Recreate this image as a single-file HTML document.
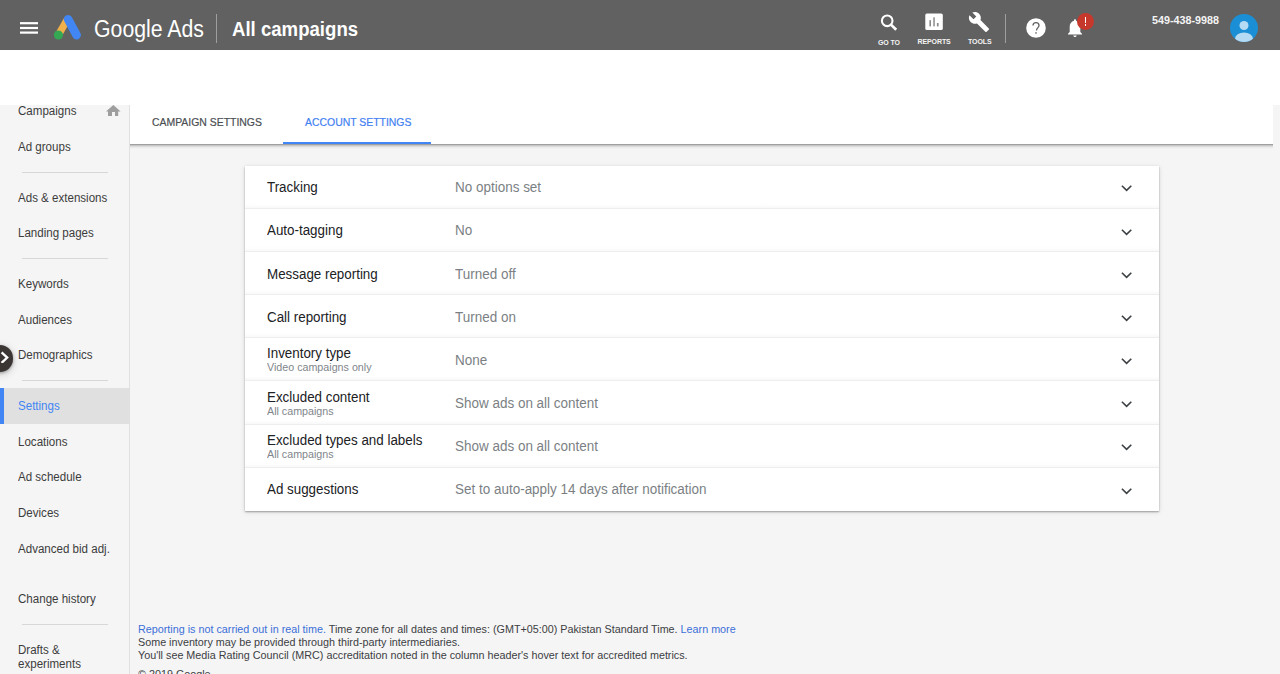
<!DOCTYPE html>
<html><head><meta charset="utf-8">
<style>
*{box-sizing:border-box;margin:0;padding:0}
html,body{width:1280px;height:674px;overflow:hidden;background:#fff;font-family:"Liberation Sans",sans-serif;}
.abs{position:absolute}
.t{position:absolute;white-space:nowrap;line-height:1;transform-origin:0 0}
#hdr{position:absolute;left:0;top:0;width:1280px;height:50px;background:#616161;color:#fff}
#hdr .lab{position:absolute;font-size:7px;font-weight:bold;color:#f4f4f4;line-height:1;white-space:nowrap;letter-spacing:-0.1px}
#side{position:absolute;left:0;top:105px;width:130px;height:569px;background:#f5f5f5;border-right:1px solid #e0e0e0}
#side .it{position:absolute;left:18px;font-size:12px;line-height:1;color:#3c3c3c;white-space:nowrap;transform:scaleX(0.963);transform-origin:0 0}
#side .sel{color:#4285f4}
#side .dv{position:absolute;left:22px;width:86px;height:1px;background:#d7d7d7}
#main{position:absolute;left:130px;top:105px;width:1150px;height:569px;background:#f5f5f5}
#tabs{position:absolute;left:130px;top:105px;width:1143px;height:39px;background:#fff}
#tabshadow{position:absolute;left:130px;top:144px;width:1143px;height:5px;background:linear-gradient(to bottom,rgba(0,0,0,.35) 0 1px,rgba(0,0,0,.19) 1px 2px,rgba(0,0,0,.10) 2px 3px,rgba(0,0,0,.04) 3px 4px,rgba(0,0,0,.015) 4px 5px)}
.tab{position:absolute;top:12px;font-size:11.5px;line-height:1;color:#4a4e52;white-space:nowrap;transform:scaleX(0.907);transform-origin:0 0;-webkit-text-stroke:0.2px #4a4e52}
#card{position:absolute;left:245px;top:166px;width:914px;height:345px;background:#fff;box-shadow:0 1px 1.5px rgba(0,0,0,.30),0 1px 5px rgba(0,0,0,.13)}
.lbl{position:absolute;left:22px;font-size:14px;line-height:1;color:#202124;white-space:nowrap;transform:scaleX(0.955);transform-origin:0 0}
.sub{position:absolute;left:22px;font-size:11px;line-height:1;color:#80868b;white-space:nowrap;transform:scaleX(0.973);transform-origin:0 0}
.val{position:absolute;left:210px;font-size:14px;line-height:1;color:#7b7f84;white-space:nowrap;transform:scaleX(0.962);transform-origin:0 0}
.chev{position:absolute;left:869px}
.dvd{position:absolute;left:0;width:914px;height:5px;background:linear-gradient(to bottom,rgba(0,0,0,0),rgba(0,0,0,.025) 75%,rgba(0,0,0,.065) 80%,rgba(0,0,0,.065))}
#foot{position:absolute;left:137.5px;top:623px;font-size:11px;line-height:13px;color:#3c4043;white-space:nowrap;transform:scaleX(0.979);transform-origin:0 0}
#foot a{color:#3b6fd8;text-decoration:none}
</style></head><body>
<div id="hdr">
  <!-- hamburger -->
  <svg class="abs" style="left:0;top:0" width="50" height="50"><rect x="20" y="22.1" width="18" height="2.2" fill="#fff"/><rect x="20" y="26.9" width="18" height="2.2" fill="#fff"/><rect x="20" y="31.5" width="18" height="2.2" fill="#fff"/></svg>
  <!-- logo -->
  <svg class="abs" style="left:52px;top:14px" width="32" height="28" viewBox="0 0 32 28">
    <line x1="15.4" y1="5.2" x2="6.4" y2="21" stroke="#f0b04c" stroke-width="7.2"/>
    <line x1="16.1" y1="5.3" x2="24.6" y2="21.1" stroke="#4286f4" stroke-width="8.6" stroke-linecap="round"/>
    <circle cx="6.4" cy="21" r="4.6" fill="#34a853"/>
  </svg>
  <div class="t" style="left:94px;top:18px;font-size:23px;color:#fff;transform:scaleX(0.925)">Google Ads</div>
  <div class="abs" style="left:216px;top:14px;width:1px;height:29px;background:#9e9e9e"></div>
  <div class="t" style="left:232px;top:19px;font-size:20px;font-weight:bold;color:#fff;transform:scaleX(0.93)">All campaigns</div>
  <!-- right icons -->
  <svg class="abs" style="left:877px;top:11px" width="22" height="22" viewBox="0 0 22 22">
    <circle cx="10.2" cy="9.8" r="5.3" fill="none" stroke="#fff" stroke-width="2.1"/>
    <line x1="14" y1="13.6" x2="19.2" y2="18.8" stroke="#fff" stroke-width="2.7"/>
  </svg>
  <div class="lab" style="left:878px;top:39px">GO TO</div>
  <svg class="abs" style="left:925px;top:13px" width="19" height="18" viewBox="0 0 19 18">
    <rect x="0.3" y="0.4" width="17.5" height="16.7" rx="1.6" fill="#fff"/>
    <rect x="4.4" y="7.2" width="1.6" height="6.2" fill="#8a8a8a"/>
    <rect x="8.2" y="4.3" width="1.7" height="9.1" fill="#9a9a9a"/>
    <rect x="11.9" y="10" width="1.7" height="3.4" fill="#8a8a8a"/>
  </svg>
  <div class="lab" style="left:917.5px;top:38px">REPORTS</div>
  <svg class="abs" style="left:968.2px;top:11px" width="22" height="22" viewBox="0 0 24 24">
    <path fill="#fff" d="M22.7 19l-9.1-9.1c.9-2.3.4-5-1.5-6.9-2-2-5-2.4-7.4-1.3L9 6 6 9 1.6 4.7C.4 7.1.9 10.1 2.9 12.1c1.9 1.9 4.6 2.4 6.9 1.5l9.1 9.1c.4.4 1 .4 1.4 0l2.3-2.3c.5-.4.5-1.1.1-1.4z"/>
  </svg>
  <div class="lab" style="left:968px;top:38px">TOOLS</div>
  <div class="abs" style="left:1005px;top:14px;width:1px;height:29px;background:#9e9e9e"></div>
  <svg class="abs" style="left:1026px;top:18px" width="20" height="20" viewBox="0 0 20 20">
    <circle cx="10" cy="10" r="9.8" fill="#fff"/>
    <path d="M7 7.6c0-1.7 1.4-3 3-3s3 1.3 3 3c0 2-2.4 2.2-2.5 4.9" fill="none" stroke="#616161" stroke-width="1.3"/>
    <rect x="9.2" y="14.3" width="1.6" height="1.3" fill="#616161"/>
  </svg>
  <svg class="abs" style="left:1066px;top:18px" width="18" height="20" viewBox="0 0 18 20">
    <path fill="#fff" d="M9 1.2c.6 0 1 .4 1 1v.6c2.700.7 4.300 3 4.300 5.900v5.300L16 15.700v.8H2v-.8l1.700-1.700V8.700c0-2.900 1.600-5.200 4.300-5.900v-.6c0-.6.4-1 1-1z"/>
    <path fill="#fff" d="M7.3 17.4h3.4c0 .9-.8 1.500-1.700 1.500s-1.700-.6-1.700-1.500z"/>
  </svg>
  <div class="abs" style="left:1076.9px;top:12.6px;width:17.3px;height:17.3px;border-radius:50%;background:#c5382b"></div>
  <div class="abs" style="left:1084.6px;top:17.2px;width:1.9px;height:6px;background:#fff"></div>
  <div class="abs" style="left:1084.6px;top:24.4px;width:1.9px;height:1.9px;background:#fff"></div>
  <div class="t" style="left:1152px;top:14.5px;font-size:11.5px;font-weight:bold;color:#f4f4f4;transform:scaleX(0.936)">549-438-9988</div>
  <svg class="abs" style="left:1230px;top:14px" width="28" height="28" viewBox="0 0 28 28">
    <defs><clipPath id="cc"><circle cx="14" cy="14" r="14"/></clipPath></defs>
    <circle cx="14" cy="14" r="14" fill="#1b8fd6"/>
    <g clip-path="url(#cc)">
    <circle cx="14" cy="11.5" r="4.5" fill="#b4daf4"/>
    <ellipse cx="14" cy="24.5" rx="8.9" ry="6" fill="#b4daf4"/>
    </g>
  </svg>
</div>

<div id="main"></div>
<div id="side">
  <div class="abs" style="left:0;top:283px;width:129px;height:36px;background:#e0e0e0"></div>
  <div class="abs" style="left:0;top:283px;width:4px;height:36px;background:#4285f4"></div>
<div class="it" style="top:0px">Campaigns</div>
<div class="it" style="top:36px">Ad groups</div>
<div class="it" style="top:87px">Ads &amp; extensions</div>
<div class="it" style="top:122px">Landing pages</div>
<div class="it" style="top:173px">Keywords</div>
<div class="it" style="top:209px">Audiences</div>
<div class="it" style="top:244px">Demographics</div>
<div class="it sel" style="top:295px">Settings</div>
<div class="it" style="top:331px">Locations</div>
<div class="it" style="top:366px">Ad schedule</div>
<div class="it" style="top:402px">Devices</div>
<div class="it" style="top:438px">Advanced bid adj.</div>
<div class="it" style="top:488px">Change history</div>
<div class="it" style="top:539px">Drafts &amp;</div>
<div class="it" style="top:553px">experiments</div>
<div class="dv" style="top:67px"></div>
<div class="dv" style="top:153px"></div>
<div class="dv" style="top:275px"></div>
<div class="dv" style="top:519px"></div>
  <svg class="abs" style="left:106px;top:0px" width="15" height="12" viewBox="0 0 15 12"><path fill="#9e9e9e" d="M7.35 0L14.6 6.4H12.2V10.9H9V6.9H6V10.9H2V6.4H0z"/></svg>
</div>
<!-- expand button -->
<div class="abs" style="left:-13px;top:345.3px;width:26.4px;height:26.4px;border-radius:50%;background:#3b3534;box-shadow:0 1px 3px rgba(0,0,0,.3),0 2px 8px rgba(0,0,0,.18)"></div>
<svg class="abs" style="left:0px;top:351px" width="10" height="12" viewBox="0 0 10 12"><path d="M1.6 1.3l5.6 5.3-5.600 5.300" fill="none" stroke="#fff" stroke-width="2.3"/></svg>

<div id="tabs">
  <div class="tab" style="left:22px">CAMPAIGN SETTINGS</div>
  <div class="tab" style="left:175px;color:#3f80f2;-webkit-text-stroke:0.2px #3f80f2">ACCOUNT SETTINGS</div>
  <div class="abs" style="left:153px;top:37px;width:148px;height:2px;background:#4285f4"></div>
</div>
<div id="tabshadow"></div>

<div id="card">
<div class="lbl" style="top:14px">Tracking</div>
<div class="val" style="top:14px">No options set</div>
<svg class="chev" style="top:9px" width="24" height="24" viewBox="0 0 24 24"><path fill="none" stroke="#3c4043" stroke-width="1.6" d="M7.9 10.7l4.7 4.6 4.7-4.6"/></svg>
<div class="lbl" style="top:57px">Auto-tagging</div>
<div class="val" style="top:57px">No</div>
<svg class="chev" style="top:53px" width="24" height="24" viewBox="0 0 24 24"><path fill="none" stroke="#3c4043" stroke-width="1.6" d="M7.9 10.7l4.7 4.6 4.7-4.6"/></svg>
<div class="lbl" style="top:101px">Message reporting</div>
<div class="val" style="top:101px">Turned off</div>
<svg class="chev" style="top:96px" width="24" height="24" viewBox="0 0 24 24"><path fill="none" stroke="#3c4043" stroke-width="1.6" d="M7.9 10.7l4.7 4.6 4.7-4.6"/></svg>
<div class="lbl" style="top:144px">Call reporting</div>
<div class="val" style="top:144px">Turned on</div>
<svg class="chev" style="top:139px" width="24" height="24" viewBox="0 0 24 24"><path fill="none" stroke="#3c4043" stroke-width="1.6" d="M7.9 10.7l4.7 4.6 4.7-4.6"/></svg>
<div class="lbl" style="top:180px">Inventory type</div>
<div class="sub" style="top:196px">Video campaigns only</div>
<div class="val" style="top:187px">None</div>
<svg class="chev" style="top:182px" width="24" height="24" viewBox="0 0 24 24"><path fill="none" stroke="#3c4043" stroke-width="1.6" d="M7.9 10.7l4.7 4.6 4.7-4.6"/></svg>
<div class="lbl" style="top:224px">Excluded content</div>
<div class="sub" style="top:240px">All campaigns</div>
<div class="val" style="top:230px">Show ads on all content</div>
<svg class="chev" style="top:225px" width="24" height="24" viewBox="0 0 24 24"><path fill="none" stroke="#3c4043" stroke-width="1.6" d="M7.9 10.7l4.7 4.6 4.7-4.6"/></svg>
<div class="lbl" style="top:267px">Excluded types and labels</div>
<div class="sub" style="top:283px">All campaigns</div>
<div class="val" style="top:273px">Show ads on all content</div>
<svg class="chev" style="top:268px" width="24" height="24" viewBox="0 0 24 24"><path fill="none" stroke="#3c4043" stroke-width="1.6" d="M7.9 10.7l4.7 4.6 4.7-4.6"/></svg>
<div class="lbl" style="top:316px">Ad suggestions</div>
<div class="val" style="top:316px">Set to auto-apply 14 days after notification</div>
<svg class="chev" style="top:312px" width="24" height="24" viewBox="0 0 24 24"><path fill="none" stroke="#3c4043" stroke-width="1.6" d="M7.9 10.7l4.7 4.6 4.7-4.6"/></svg>
<div class="dvd" style="top:38px"></div>
<div class="dvd" style="top:81px"></div>
<div class="dvd" style="top:124px"></div>
<div class="dvd" style="top:167px"></div>
<div class="dvd" style="top:210px"></div>
<div class="dvd" style="top:254px"></div>
<div class="dvd" style="top:297px"></div>
</div>

<div id="foot">
<a>Reporting is not carried out in real time.</a> Time zone for all dates and times: (GMT+05:00) Pakistan Standard Time. <a>Learn more</a><br>
Some inventory may be provided through third-party intermediaries.<br>
You'll see Media Rating Council (MRC) accreditation noted in the column header's hover text for accredited metrics.<br>
<span style="position:relative;top:6px">© 2019 Google</span>
</div>
</body></html>
